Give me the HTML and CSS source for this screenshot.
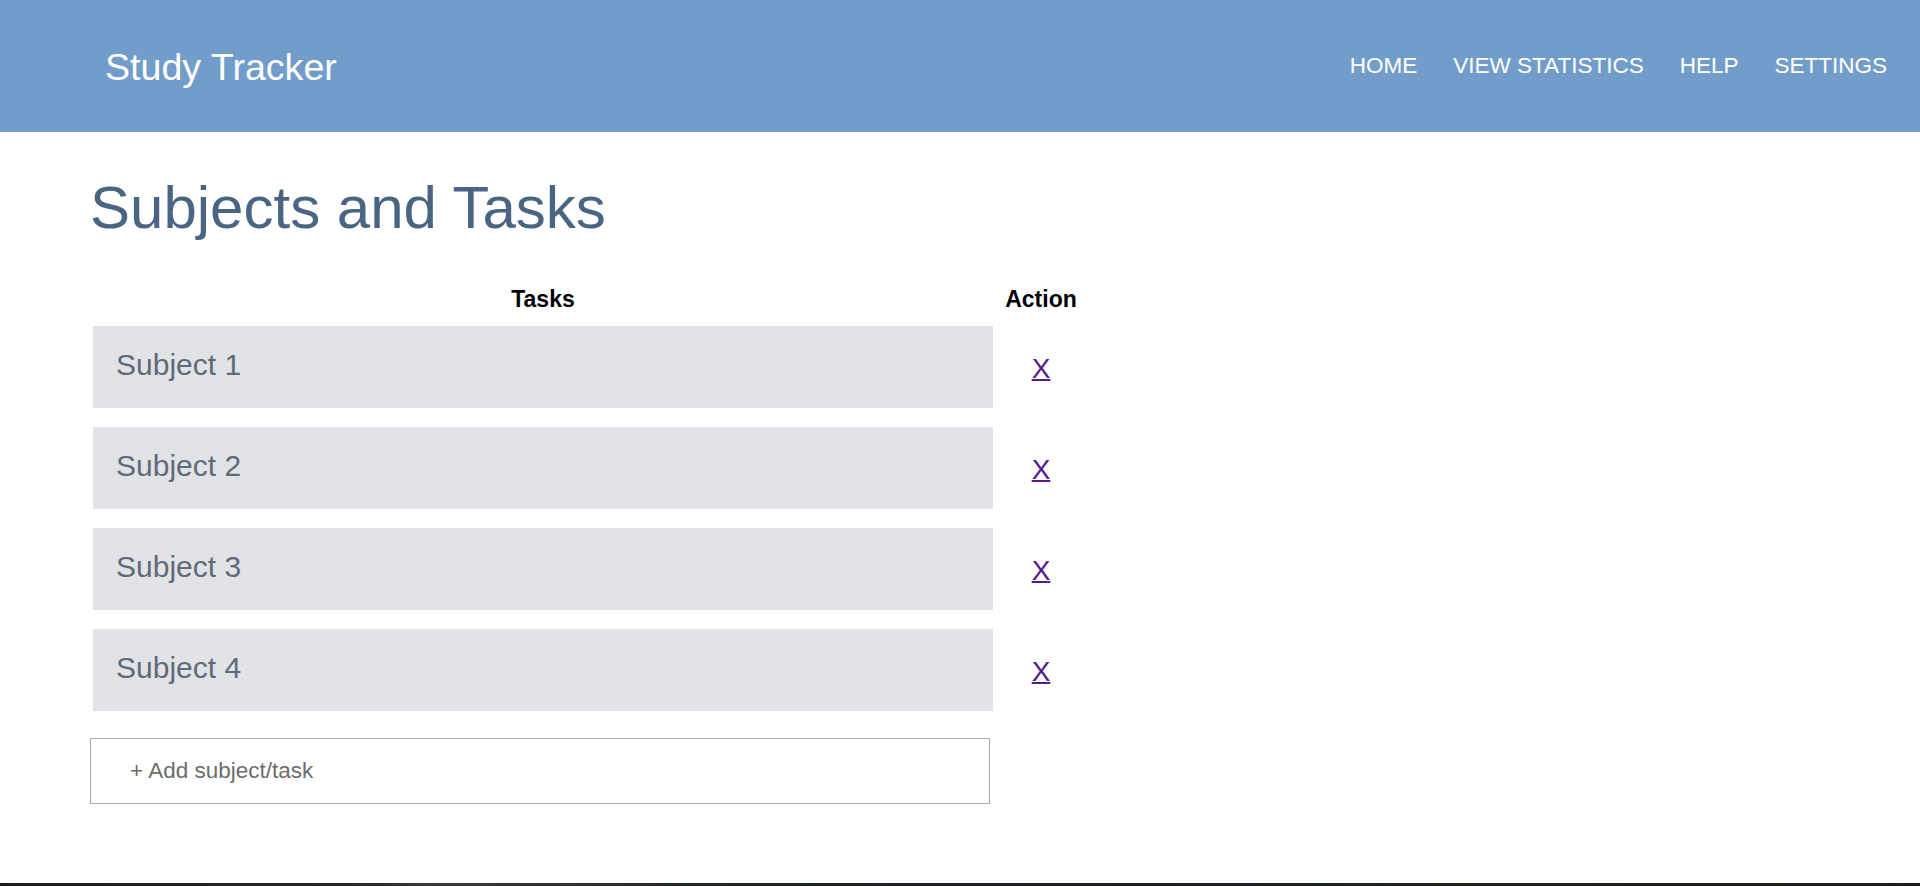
FILE: index.html
```html
<!DOCTYPE html>
<html lang="en">
<head>
<meta charset="utf-8">
<title>Study Tracker</title>
<link rel="stylesheet" href="styles.css">
</head>
<body>
<div class="page">
  <header class="topbar">
    <div class="brand">Study Tracker</div>
    <nav class="nav">
      <a class="nav-link" href="#">HOME</a>
      <a class="nav-link" href="#">VIEW STATISTICS</a>
      <a class="nav-link" href="#">HELP</a>
      <a class="nav-link" href="#">SETTINGS</a>
    </nav>
  </header>
  <main class="content">
    <h1 class="title">Subjects and Tasks</h1>
    <div class="table">
      <div class="thead">
        <div class="th th-tasks">Tasks</div>
        <div class="th th-action">Action</div>
      </div>
      <div class="tbody">
        <div class="row">
          <div class="cell-task">Subject 1</div>
          <div class="cell-action"><a class="remove" href="#">X</a></div>
        </div>
        <div class="row">
          <div class="cell-task">Subject 2</div>
          <div class="cell-action"><a class="remove" href="#">X</a></div>
        </div>
        <div class="row">
          <div class="cell-task">Subject 3</div>
          <div class="cell-action"><a class="remove" href="#">X</a></div>
        </div>
        <div class="row">
          <div class="cell-task">Subject 4</div>
          <div class="cell-action"><a class="remove" href="#">X</a></div>
        </div>
      </div>
    </div>
    <button class="add-btn" type="button">+ Add subject/task</button>
  </main>
  <div class="bottom-strip"></div>
</div>
</body>
</html>
```

FILE: styles.css
```css
html, body {
  margin: 0;
  padding: 0;
  background: #ffffff;
}

body {
  font-family: "Liberation Sans", Arial, sans-serif;
}

.page {
  min-height: 100vh;
  display: flex;
  flex-direction: column;
}

.topbar {
  height: 132px;
  background: #729dca;
  display: flex;
  align-items: center;
  justify-content: space-between;
  padding: 0 33px 0 105px;
  box-sizing: border-box;
  flex-shrink: 0;
}

.brand {
  color: #ffffff;
  font-size: 37.6px;
  padding-top: 2px;
}

.nav {
  display: flex;
  gap: 36px;
}

.nav-link {
  color: #ffffff;
  font-size: 22.5px;
  text-decoration: none;
}

.content {
  padding-left: 89px;
}

.title {
  margin: 42px 0 0 1px;
  font-size: 60px;
  line-height: 68px;
  font-weight: normal;
  color: #4a6584;
}

.table {
  margin-top: 44px;
  margin-left: 4px;
}

.thead {
  display: grid;
  grid-template-columns: 900px 92px;
  column-gap: 2px;
  margin-bottom: 14px;
}

.th {
  font-size: 23px;
  line-height: 26px;
  font-weight: bold;
  color: #000000;
  text-align: center;
}

.tbody {
  display: flex;
  flex-direction: column;
  gap: 19px;
}

.row {
  display: grid;
  grid-template-columns: 900px 92px;
  column-gap: 2px;
  height: 82px;
}

.cell-task {
  background: #e2e3e7;
  color: #5f6b78;
  font-size: 30px;
  line-height: 34px;
  padding: 22px 0 0 23px;
  box-sizing: border-box;
}

.cell-action {
  text-align: center;
  font-size: 28px;
  line-height: 79px;
  padding-top: 3px;
}

.remove {
  color: #551a8b;
  text-decoration: underline;
  text-decoration-thickness: 2px;
}

.add-btn {
  display: block;
  margin: 27px 0 0 1px;
  width: 900px;
  height: 66px;
  box-sizing: border-box;
  background: #ffffff;
  border: 1px solid #a9a9a9;
  border-radius: 0;
  padding: 0 0 0 39px;
  text-align: left;
  font-family: "Liberation Sans", Arial, sans-serif;
  font-size: 22.5px;
  line-height: 64px;
  color: #6d6b6b;
}

.bottom-strip {
  margin-top: auto;
  height: 3px;
  background: linear-gradient(90deg, #1c1c1c 0%, #2a2a2a 20%, #3a3a3a 22%, #1e2222 40%, #182226 60%, #22221a 80%, #1c1c1c 100%);
  flex-shrink: 0;
}
```
